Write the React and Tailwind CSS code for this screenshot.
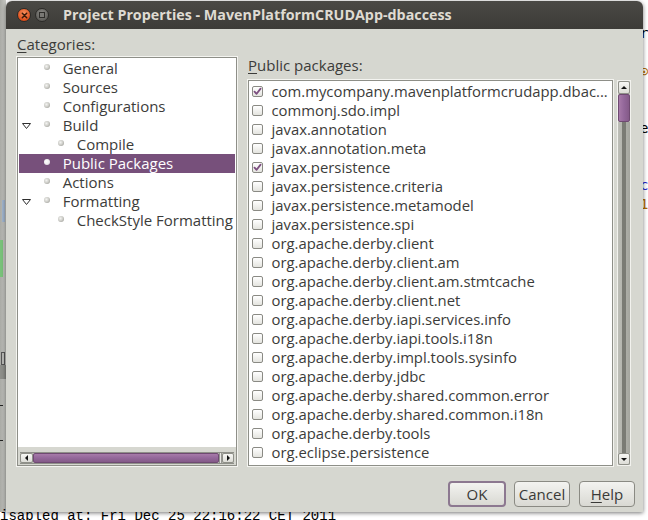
import React from 'react';

const cats = [
  { label: 'General', level: 1 },
  { label: 'Sources', level: 1 },
  { label: 'Configurations', level: 1 },
  { label: 'Build', level: 1, expand: true },
  { label: 'Compile', level: 2 },
  { label: 'Public Packages', level: 1, selected: true },
  { label: 'Actions', level: 1 },
  { label: 'Formatting', level: 1, expand: true },
  { label: 'CheckStyle Formatting', level: 2 },
];

const pkgs = [
  ['com.mycompany.mavenplatformcrudapp.dbac...', true],
  ['commonj.sdo.impl', false],
  ['javax.annotation', false],
  ['javax.annotation.meta', false],
  ['javax.persistence', true],
  ['javax.persistence.criteria', false],
  ['javax.persistence.metamodel', false],
  ['javax.persistence.spi', false],
  ['org.apache.derby.client', false],
  ['org.apache.derby.client.am', false],
  ['org.apache.derby.client.am.stmtcache', false],
  ['org.apache.derby.client.net', false],
  ['org.apache.derby.iapi.services.info', false],
  ['org.apache.derby.iapi.tools.i18n', false],
  ['org.apache.derby.impl.tools.sysinfo', false],
  ['org.apache.derby.jdbc', false],
  ['org.apache.derby.shared.common.error', false],
  ['org.apache.derby.shared.common.i18n', false],
  ['org.apache.derby.tools', false],
  ['org.eclipse.persistence', false],
];

function Bullet({ selected }) {
  return (
    <span
      className={
        'block w-[6px] h-[6px] rounded-full mb-[3px] shrink-0 ' +
        (selected
          ? 'bg-[radial-gradient(circle_at_40%_40%,#ffffff_0%,#f0eef0_50%,#cfc6d0_100%)]'
          : 'bg-[radial-gradient(circle_at_40%_40%,#f4f4f2_0%,#cfcfca_45%,#8c8c86_100%)]')
      }
    />
  );
}

function Triangle() {
  return (
    <svg width="9" height="6" viewBox="0 0 9 6" className="block">
      <polygon points="0.5,0.5 8.5,0.5 4.5,5.5" fill="#ffffff" stroke="#2e2e2e" strokeWidth="1" />
    </svg>
  );
}

function ArrowBtn({ dir, className = '' }) {
  const pts = {
    up: '1,4 7,4 4,1',
    down: '1,1 7,1 4,4',
    left: '4,1 4,7 1,4',
    right: '1,1 1,7 4,4',
  }[dir];
  const vert = dir === 'up' || dir === 'down';
  return (
    <div
      className={
        'flex items-center justify-center border border-[#8f9089] rounded-[2px] bg-[linear-gradient(#f7f7f4,#dcdcd6)] shrink-0 ' +
        className
      }
    >
      <svg width={vert ? 8 : 5} height={vert ? 5 : 8} viewBox={vert ? '0 0 8 5' : '0 0 5 8'} className="block">
        <polygon points={pts} fill="#111" />
      </svg>
    </div>
  );
}

function Checkbox({ checked }) {
  return (
    <span className="relative block w-[11px] h-[11px] shrink-0 rounded-[2px] border border-[#8a8a84] bg-[linear-gradient(#ffffff,#e4e4df)]">
      {checked && (
        <svg width="11" height="11" viewBox="0 0 11 11" className="absolute left-[-1px] top-[-1px]">
          <path d="M2.5 5.6 L4.6 7.8 L8.6 2.6" fill="none" stroke="#7c4f80" strokeWidth="1.8" strokeLinecap="round" strokeLinejoin="round" />
        </svg>
      )}
    </span>
  );
}

function Btn({ children, focus, w }) {
  return (
    <div
      className={
        'h-[26px] rounded-[4px] flex items-center justify-center text-[15px] text-[#3a3a38] ' +
        w +
        ' ' +
        (focus
          ? 'border-2 border-[#8c7890] bg-[linear-gradient(#f3f3f0,#d9d9d3)]'
          : 'border border-[#8a8a83] bg-[linear-gradient(#f3f3f0,#d9d9d3)]')
      }
    >
      {children}
    </div>
  );
}

export default function App() {
  return (
    <div
      className="relative w-[648px] h-[520px] overflow-hidden bg-white"
      style={{ fontFamily: '"Open Sans", "Noto Sans", sans-serif' }}
    >
      {/* desktop / IDE behind the dialog */}
      <div className="absolute left-0 top-0 w-[6px] h-[512px] bg-[linear-gradient(90deg,#a9aaa5,#c9cac5)]">
        <div className="absolute left-[2px] top-[200px] w-[3px] h-[22px] bg-[#9fb3cc]" />
        <div className="absolute left-0 top-[240px] w-[3px] h-[37px] bg-[#79c27a]" />
        <div className="absolute left-[1px] top-[352px] w-[4px] h-[13px] border border-[#555]" />
        <div className="absolute left-0 top-[365px] w-[6px] h-[14px] bg-[#8d8e89]" />
        <div className="absolute left-0 top-[405px] w-[3px] h-[1px] bg-[#222]" />
        <div className="absolute left-0 top-[440px] w-[3px] h-[1px] bg-[#222]" />
      </div>
      <div className="absolute left-[640px] top-[24px] flex flex-col text-[14px] leading-[19px] text-black" style={{ fontFamily: '"DejaVu Sans Mono", monospace' }}>
        <span>r</span>
        <span>&nbsp;</span>
        <span className="text-[#b36b00]">⊙</span>
        <span>&nbsp;</span>
        <span>&nbsp;</span>
        <span>e</span>
        <span>&nbsp;</span>
        <span>&nbsp;</span>
        <span className="text-[#2222cc]">c</span>
        <span className="text-[#b36b00]">1</span>
      </div>
      <div
        className="absolute left-0 top-[508px] text-[14px] leading-[16px] text-black whitespace-nowrap"
        style={{ fontFamily: '"Liberation Mono", monospace' }}
      >
        isabled at: Fri Dec 25 22:16:22 CET 2011
      </div>

      {/* dialog window */}
      <div className="absolute left-[6px] top-[1px] w-[637px] h-[511px] flex flex-col rounded-t-[6px] shadow-[0_1px_4px_rgba(0,0,0,0.55)]">
        {/* title bar */}
        <div className="h-[28px] shrink-0 flex items-center rounded-t-[6px] bg-[linear-gradient(#4a4945,#3c3b37)] pl-[11px]">
          <div className="w-[14px] h-[14px] rounded-full bg-[radial-gradient(circle_at_50%_35%,#f7905e,#e0501c_70%,#b9400f)] border border-[#2c2b28] flex items-center justify-center">
            <svg width="7" height="7" viewBox="0 0 7 7" className="block">
              <path d="M1.3 1.3 L5.7 5.7 M5.7 1.3 L1.3 5.7" stroke="#3a1a0a" strokeWidth="1.5" strokeLinecap="round" />
            </svg>
          </div>
          <div className="ml-[4px] w-[14px] h-[14px] rounded-full bg-[radial-gradient(circle_at_50%_35%,#8a8985,#5e5d59_75%)] border border-[#2c2b28] flex items-center justify-center">
            <span className="block w-[6px] h-[6px] border border-[#2e2d2a] bg-[#7a7975]" />
          </div>
          <span className="ml-[14px] text-[14.3px] font-bold text-[#dfdbd2] whitespace-nowrap leading-[28px]">
            Project Properties - MavenPlatformCRUDApp-dbaccess
          </span>
        </div>

        {/* body */}
        <div className="flex-1 flex flex-col bg-[#d6d7d0] pl-[11px] pr-[8px] pt-[6px] pb-[5px]">
          <div className="flex-1 flex gap-[11px] pr-[4px] min-h-0">
            {/* categories */}
            <div className="w-[220px] flex flex-col">
              <div className="h-[19px] leading-[19px] text-[15px] text-[#3c3c3a] mb-[3px]">
                <span className="underline underline-offset-[2px]">C</span>ategories:
              </div>
              <div className="flex-1 flex flex-col border border-[#8e8f88] bg-white shadow-[0_0_0_1px_#f4f4f0]">
                <div className="flex-1 pt-[1px] px-[1px] overflow-hidden">
                  {cats.map((c) => (
                    <div
                      key={c.label}
                      className={
                        'h-[19px] flex items-center whitespace-nowrap text-[15px] leading-[19px] ' +
                        (c.selected ? 'bg-[#77507b] text-white' : 'text-[#3c3c3a]')
                      }
                    >
                      {c.level === 1 ? (
                        <span className="w-[25px] shrink-0 pl-[3px] flex items-center">{c.expand && <Triangle />}</span>
                      ) : (
                        <span className="w-[38.5px] shrink-0" />
                      )}
                      <Bullet selected={c.selected} />
                      <span className={c.level === 1 ? 'ml-[12.7px]' : 'ml-[13.2px]'}>{c.label}</span>
                    </div>
                  ))}
                </div>
                <div className="h-[18px] shrink-0 bg-[#d6d7d0] pt-[5px] px-[2px] pb-[1px]">
                  <div className="h-[12px] flex bg-[#b9bab3] border-y border-[#8f9089]">
                    <ArrowBtn dir="left" className="w-[13px] h-[10px]" />
                    <div className="flex-1 rounded-[2px] border border-[#6f4a72] bg-[linear-gradient(#a77aa9,#93679a_50%,#845a88)]" />
                    <div className="w-[3px] bg-[linear-gradient(90deg,#6e6e69,#e8e8e4,#6e6e69)]" />
                    <ArrowBtn dir="right" className="w-[12px] h-[10px]" />
                  </div>
                </div>
              </div>
            </div>

            {/* public packages */}
            <div className="flex-1 flex flex-col">
              <div className="mt-[21px] h-[19px] leading-[19px] text-[15px] text-[#3c3c3a] mb-[5px]">
                <span className="underline underline-offset-[2px]">P</span>ublic packages:
              </div>
              <div className="flex-1 flex gap-[4px] min-h-0">
                <div className="flex-1 border border-[#8e8f88] bg-white shadow-[0_0_0_1px_#f4f4f0] pt-[1px] overflow-hidden">
                  {pkgs.map(([p, ch]) => (
                    <div key={p} className="h-[19px] flex items-center pl-[2.5px] whitespace-nowrap text-[14.85px] leading-[19px] text-[#3c3c3a]">
                      <Checkbox checked={ch} />
                      <span className="ml-[9px]">{p}</span>
                    </div>
                  ))}
                </div>
                <div className="w-[14px] flex flex-col border border-[#f2f2ee] bg-[#c4c5be]">
                  <ArrowBtn dir="up" className="w-full h-[13px]" />
                  <div className="h-[28px] shrink-0 rounded-[2px] border border-[#6f4a72] bg-[linear-gradient(90deg,#a77aa9,#93679a_50%,#845a88)]" />
                  <div className="flex-1 flex justify-center bg-[linear-gradient(90deg,#bdbeb7,#a4a59e)]">
                    <div className="w-[4px] bg-[#7a7b74]" />
                  </div>
                  <ArrowBtn dir="down" className="w-full h-[12px]" />
                </div>
              </div>
            </div>
          </div>

          {/* buttons */}
          <div className="mt-[15px] h-[26px] shrink-0 flex justify-end gap-[8px]">
            <Btn focus w="w-[58px]">OK</Btn>
            <Btn w="w-[56px]">Cancel</Btn>
            <div className="ml-[1px]">
              <Btn w="w-[56px]">
                <span>
                  <span className="underline underline-offset-[2px]">H</span>elp
                </span>
              </Btn>
            </div>
          </div>
        </div>
      </div>
    </div>
  );
}
